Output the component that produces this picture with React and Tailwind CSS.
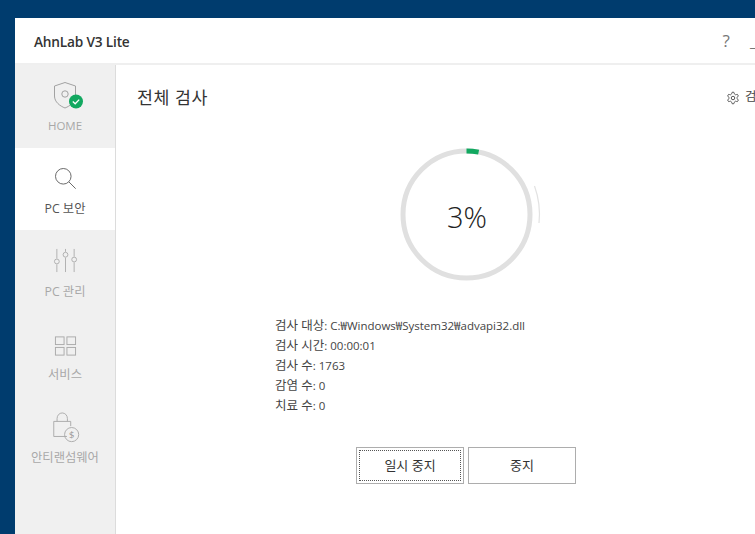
import React from "react";

const KR = { fontFamily: '"Open Sans","Noto Sans CJK KR",sans-serif' };

function Shield() {
  return (
    <svg width="36" height="32" viewBox="0 0 36 32" fill="none" className="translate-x-[5px]">
      <path d="M13 2.5 L23.5 6 V16 C23.5 22 18 26 13 28 C8 26 2.5 22 2.5 16 V6 Z" stroke="#a2a2a2" strokeWidth="1" />
      <circle cx="13" cy="14" r="3.2" stroke="#a2a2a2" strokeWidth="1" />
      <circle cx="24" cy="21.5" r="7" fill="#12a860" />
      <path d="M20.8 21.5 L23.2 23.8 L27.2 19.6" stroke="#fff" strokeWidth="1.3" />
    </svg>
  );
}
function Search() {
  return (
    <svg width="23" height="23" viewBox="0 0 26 26" fill="none" stroke="#666" strokeWidth="1.1">
      <circle cx="10.5" cy="10.5" r="8.8" />
      <path d="M16.8 16.8 L24.5 24.5" />
    </svg>
  );
}
function Sliders() {
  return (
    <svg width="25" height="25" viewBox="0 0 26 26" fill="none" stroke="#a8a8a8" strokeWidth="0.9" className="-translate-y-[1px]">
      <path d="M4 1 V11 M4 17 V25 M13 1 V4 M13 10 V25 M22 1 V9 M22 15 V25" />
      <circle cx="4" cy="14" r="2.5" />
      <circle cx="13" cy="7" r="2.5" />
      <circle cx="22" cy="12" r="2.5" />
    </svg>
  );
}
function Grid() {
  return (
    <svg width="23" height="22" viewBox="0 0 24 22" fill="none" stroke="#aaa" strokeWidth="1" className="translate-y-[2px]">
      <rect x="1.5" y="1.5" width="9" height="8" />
      <rect x="13.5" y="1.5" width="9" height="8" />
      <rect x="1.5" y="12.5" width="9" height="8" />
      <rect x="13.5" y="12.5" width="9" height="8" />
    </svg>
  );
}
function Lock() {
  return (
    <svg width="30" height="32" viewBox="0 0 30 34" fill="none" stroke="#aaa" strokeWidth="1" className="translate-x-[1px] translate-y-[2px]">
      <path d="M16 26 H2 V10 H20 V15" />
      <path d="M5.5 10 V7 C5.5 3.5 8 1 11 1 C14 1 16.5 3.5 16.5 7 V10" />
      <circle cx="21" cy="24" r="7.5" />
      <text x="21" y="27.5" fontSize="10" textAnchor="middle" fill="#999" stroke="none" style={KR}>$</text>
    </svg>
  );
}
function Gear() {
  return (
    <svg width="14" height="14" viewBox="0 0 24 24" fill="none" stroke="#555" strokeWidth="1.7">
      <path d="M12.2 2h-.4a2 2 0 0 0-2 2v.2a2 2 0 0 1-1 1.7l-.4.3a2 2 0 0 1-2 0l-.2-.1a2 2 0 0 0-2.7.7l-.2.4a2 2 0 0 0 .7 2.7l.2.1a2 2 0 0 1 1 1.7v.5a2 2 0 0 1-1 1.8l-.2.1a2 2 0 0 0-.7 2.7l.2.4a2 2 0 0 0 2.7.7l.2-.1a2 2 0 0 1 2 0l.4.3a2 2 0 0 1 1 1.7v.2a2 2 0 0 0 2 2h.4a2 2 0 0 0 2-2v-.2a2 2 0 0 1 1-1.7l.4-.3a2 2 0 0 1 2 0l.2.1a2 2 0 0 0 2.7-.7l.2-.4a2 2 0 0 0-.7-2.7l-.2-.1a2 2 0 0 1-1-1.8v-.5a2 2 0 0 1 1-1.7l.2-.1a2 2 0 0 0 .7-2.7l-.2-.4a2 2 0 0 0-2.7-.7l-.2.1a2 2 0 0 1-2 0l-.4-.3a2 2 0 0 1-1-1.7V4a2 2 0 0 0-2-2z" />
      <circle cx="12" cy="12" r="3" />
    </svg>
  );
}

function NavItem({ icon, label, active, size = "text-[12.3px]", gap = "mt-[5px]" }) {
  return (
    <div className={"flex h-[82.5px] flex-col items-center pt-[14px] " + (active ? "bg-white" : "")}>
      <div className="flex h-[34px] items-center justify-center">{icon}</div>
      <div className={"leading-[16px] whitespace-nowrap " + gap + " " + size + " " + (active ? "text-[#555]" : "text-[#a8a8a8]")}>{label}</div>
    </div>
  );
}

function Ring() {
  const r = 63.5, c = 66.5;
  const p = (deg, rad) => [c + rad * Math.sin((deg * Math.PI) / 180), c - rad * Math.cos((deg * Math.PI) / 180)];
  const [ax, ay] = p(0, r);
  const [bx, by] = p(11, r);
  return (
    <svg width="143" height="133" viewBox="0 0 143 133" fill="none">
      <circle cx={c} cy={c} r={r} stroke="#e0e0e0" strokeWidth="5" />
      <path d={`M${ax} ${ay} A${r} ${r} 0 0 1 ${bx} ${by}`} stroke="#12a860" strokeWidth="5" />
      <path d="M134.5 38 Q141 56 139 75" stroke="#e2e2e2" strokeWidth="1.2" />
    </svg>
  );
}

function Info({ label, value }) {
  return (
    <div className="h-[20px] leading-[20px] whitespace-nowrap">
      <span className="text-[12.5px]">{label}</span>
      <span className="text-[11.5px]">: {value}</span>
    </div>
  );
}

export default function App() {
  return (
    <div className="h-[534px] w-[755px] overflow-hidden bg-[#003c6e] pt-[18px] pl-[15px] text-[#333]" style={KR}>
      <div className="h-[516px] w-[800px] bg-white">
        <header className="flex h-[47px] items-center border-b-2 border-[#efefef] pl-[19px]">
          <span className="mt-[3px] text-[13.7px] font-semibold tracking-[-0.2px] text-[#333]">AhnLab V3 Lite</span>
          <span className="ml-[593px] text-[17px] text-[#777]">?</span>
          <span className="ml-[20px] text-[17px] text-[#777]">_</span>
        </header>
        <div className="flex h-[469px]">
          <nav className="w-[101px] shrink-0 border-r border-[#dcdcdc] bg-[#f0f0f0]">
            <NavItem icon={<Shield />} label="HOME" size="text-[11.5px]" />
            <NavItem icon={<Search />} label="PC 보안" active />
            <NavItem icon={<Sliders />} label="PC 관리" gap="mt-[6px]" />
            <NavItem icon={<Grid />} label="서비스" gap="mt-[6px]" />
            <NavItem icon={<Lock />} label="안티랜섬웨어" gap="mt-[6.5px]" />
          </nav>
          <main className="flex-1 pl-[21px]">
            <div className="flex h-[65px] items-center">
              <h1 className="text-[17.3px] leading-none font-normal tracking-[0.6px] text-[#333]">전체 검사</h1>
              <div className="ml-[518px] flex items-center gap-[5px] text-[12.5px] whitespace-nowrap text-[#444]">
                <Gear />
                <span>검사 설정</span>
              </div>
            </div>
            <div className="ml-[263px] flex">
              <div className="relative mt-[18px] h-[133px] w-[143px]">
                <Ring />
                <span className="absolute top-[68px] left-[67px] -translate-x-1/2 -translate-y-1/2 text-[29px] leading-none font-light whitespace-nowrap text-[#222]">3%</span>
              </div>
            </div>
            <div className="mt-[33px] ml-[138px] text-[#444]">
              <Info label="검사 대상" value="C:₩Windows₩System32₩advapi32.dll" />
              <Info label="검사 시간" value="00:00:01" />
              <Info label="검사 수" value="1763" />
              <Info label="감염 수" value="0" />
              <Info label="치료 수" value="0" />
            </div>
            <div className="mt-[33px] ml-[219px] flex gap-[4px] text-[13px] text-[#333]">
              <div className="flex h-[37px] w-[108px] items-center justify-center border border-[#adadad] bg-white p-[2px]">
                <div className="flex h-full w-full items-center justify-center border border-dotted border-[#555]">일시 중지</div>
              </div>
              <div className="flex h-[37px] w-[108px] items-center justify-center border border-[#adadad] bg-white">중지</div>
            </div>
          </main>
        </div>
      </div>
    </div>
  );
}
